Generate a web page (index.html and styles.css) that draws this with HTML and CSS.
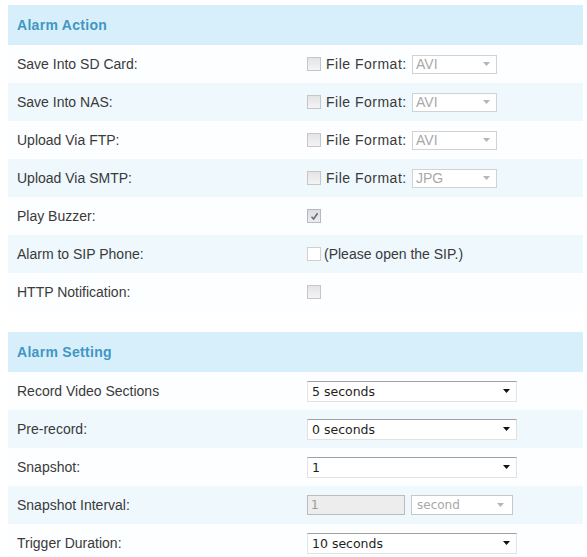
FILE: index.html
```html
<!DOCTYPE html>
<html>
<head>
<meta charset="utf-8">
<link rel="stylesheet" href="styles.css">
</head>
<body>
<div class="page">
  <section class="section">
    <div class="head">Alarm Action</div>
    <div class="row">
      <div class="label">Save Into SD Card:</div>
      <div class="ctrl"><span class="cb"></span><span class="ff">File Format:</span><div class="fsel"><span>AVI</span><svg width="7" height="4" viewBox="0 0 7 4"><path d="M0 0H7L3.5 4Z" fill="#b5b5b5"/></svg></div></div>
    </div>
    <div class="row alt">
      <div class="label">Save Into NAS:</div>
      <div class="ctrl"><span class="cb"></span><span class="ff">File Format:</span><div class="fsel"><span>AVI</span><svg width="7" height="4" viewBox="0 0 7 4"><path d="M0 0H7L3.5 4Z" fill="#b5b5b5"/></svg></div></div>
    </div>
    <div class="row">
      <div class="label">Upload Via FTP:</div>
      <div class="ctrl"><span class="cb"></span><span class="ff">File Format:</span><div class="fsel"><span>AVI</span><svg width="7" height="4" viewBox="0 0 7 4"><path d="M0 0H7L3.5 4Z" fill="#b5b5b5"/></svg></div></div>
    </div>
    <div class="row alt">
      <div class="label">Upload Via SMTP:</div>
      <div class="ctrl"><span class="cb"></span><span class="ff">File Format:</span><div class="fsel"><span>JPG</span><svg width="7" height="4" viewBox="0 0 7 4"><path d="M0 0H7L3.5 4Z" fill="#b5b5b5"/></svg></div></div>
    </div>
    <div class="row">
      <div class="label">Play Buzzer:</div>
      <div class="ctrl"><span class="cb checked"><svg width="9" height="9" viewBox="0 0 9 9"><path d="M1.5 4.8L3.6 7L7.6 1.2" fill="none" stroke="#6a6a78" stroke-width="1.6"/></svg></span></div>
    </div>
    <div class="row alt">
      <div class="label">Alarm to SIP Phone:</div>
      <div class="ctrl"><span class="cb plain"></span><span class="note">(Please open the SIP.)</span></div>
    </div>
    <div class="row">
      <div class="label">HTTP Notification:</div>
      <div class="ctrl"><span class="cb"></span></div>
    </div>
  </section>

  <section class="section">
    <div class="head">Alarm Setting</div>
    <div class="row">
      <div class="label">Record Video Sections</div>
      <div class="ctrl"><div class="sel"><span>5 seconds</span><svg width="7" height="4" viewBox="0 0 7 4"><path d="M0 0H7L3.5 4Z" fill="#111"/></svg></div></div>
    </div>
    <div class="row alt">
      <div class="label">Pre-record:</div>
      <div class="ctrl"><div class="sel"><span>0 seconds</span><svg width="7" height="4" viewBox="0 0 7 4"><path d="M0 0H7L3.5 4Z" fill="#111"/></svg></div></div>
    </div>
    <div class="row">
      <div class="label">Snapshot:</div>
      <div class="ctrl"><div class="sel"><span>1</span><svg width="7" height="4" viewBox="0 0 7 4"><path d="M0 0H7L3.5 4Z" fill="#111"/></svg></div></div>
    </div>
    <div class="row alt">
      <div class="label">Snapshot Interval:</div>
      <div class="ctrl"><div class="inp">1</div><div class="sel2"><span>second</span><svg width="7" height="4" viewBox="0 0 7 4"><path d="M0 0H7L3.5 4Z" fill="#b5b5b5"/></svg></div></div>
    </div>
    <div class="row">
      <div class="label">Trigger Duration:</div>
      <div class="ctrl"><div class="sel"><span>10 seconds</span><svg width="7" height="4" viewBox="0 0 7 4"><path d="M0 0H7L3.5 4Z" fill="#111"/></svg></div></div>
    </div>
  </section>
</div>
</body>
</html>
```

FILE: styles.css
```css
html, body {
  margin: 0;
  padding: 0;
  background: #ffffff;
}
body {
  font-family: "Liberation Sans", Arial, sans-serif;
  color: #3a3a3a;
}
.page {
  padding: 5px 4px 0 8px;
  display: flex;
  flex-direction: column;
  gap: 21px;
}
.section {
  display: flex;
  flex-direction: column;
}
.head {
  height: 40px;
  background: #d7effa;
  display: flex;
  align-items: center;
  padding-left: 9px;
  font-weight: bold;
  font-size: 14px;
  letter-spacing: 0.3px;
  color: #4196c4;
}
.row {
  height: 38px;
  display: flex;
  align-items: center;
  background: #fdfeff;
}
.row.alt {
  background: #eef8fd;
}
.label {
  width: 290px;
  padding-left: 9px;
  font-size: 14px;
  color: #3a3a3a;
}
.ctrl {
  display: flex;
  align-items: center;
}
.cb {
  width: 12px;
  height: 12px;
  border: 1px solid #c6c6c6;
  background: linear-gradient(#e4e4e4, #f4f4f4);
  display: flex;
  align-items: center;
  justify-content: center;
}
.cb.plain {
  background: #fff;
  border-color: #d0d0d0;
}
.cb.checked {
  background: linear-gradient(#dcdce2, #ececf0);
  border-color: #b8b8c0;
}
.ff {
  margin-left: 5px;
  font-size: 14px;
  letter-spacing: 0.5px;
  color: #3a3a3a;
  width: 86px;
}
.note {
  margin-left: 3px;
  font-size: 14px;
  color: #3a3a3a;
}
.fsel {
  width: 85px;
  height: 19px;
  box-sizing: border-box;
  border: 1px solid #d2d2d2;
  background: #fff;
  display: flex;
  align-items: center;
  justify-content: space-between;
  padding: 0 6px 0 3px;
  font-size: 14px;
  color: #a9a9a9;
}
.sel {
  width: 210px;
  height: 21px;
  box-sizing: border-box;
  border: 1px solid #e2e2e2;
  border-top-color: #a0a0a0;
  background: #fff;
  display: flex;
  align-items: center;
  justify-content: space-between;
  padding: 0 6px 0 4px;
  font-family: "DejaVu Sans", Verdana, sans-serif;
  font-size: 12.5px;
  color: #1e1e1e;
}
.inp {
  width: 98px;
  height: 20px;
  box-sizing: border-box;
  border: 1px solid #bcbcbc;
  background: #ededed;
  display: flex;
  align-items: center;
  padding-left: 3px;
  font-family: "DejaVu Sans", Verdana, sans-serif;
  font-size: 12px;
  color: #9a9a9a;
}
.sel2 {
  margin-left: 6px;
  width: 102px;
  height: 20px;
  box-sizing: border-box;
  border: 1px solid #c8c8c8;
  background: #fff;
  display: flex;
  align-items: center;
  justify-content: space-between;
  padding: 0 8px 0 5px;
  font-family: "DejaVu Sans", Verdana, sans-serif;
  font-size: 12px;
  color: #a8a8a8;
}
```
